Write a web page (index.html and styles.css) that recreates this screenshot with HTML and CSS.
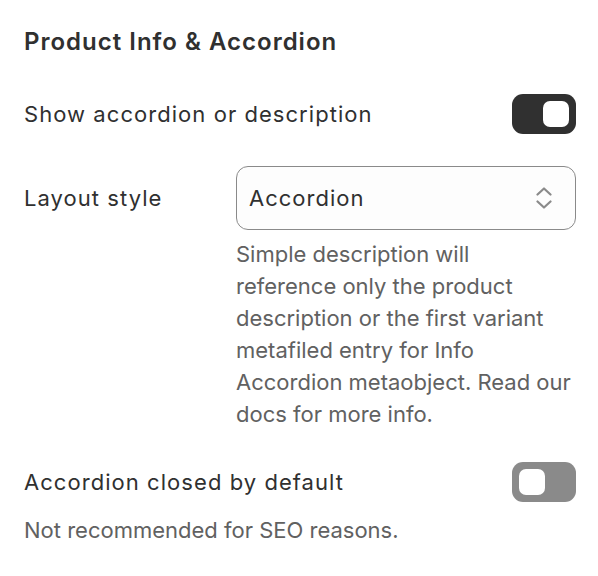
FILE: index.html
```html
<!DOCTYPE html>
<html>
<head>
<meta charset="utf-8">
<link rel="stylesheet" href="styles.css">
</head>
<body>
<div class="panel">
  <h2 class="title">Product Info &amp; Accordion</h2>
  <div class="row toggle-row">
    <span class="label">Show accordion or description</span>
    <span class="switch on"><span class="knob"></span></span>
  </div>
  <div class="row field-row">
    <span class="label field-label">Layout style</span>
    <div class="field">
      <div class="select">
        <span class="select-value">Accordion</span>
        <svg class="chev" width="16" height="24" viewBox="0 0 16 24" fill="none" stroke="#8a8a8a" stroke-width="2.2" stroke-linecap="round" stroke-linejoin="round">
          <path d="M1.5 8.5 L8 2.5 L14.5 8.5"/>
          <path d="M1.5 15.5 L8 21.5 L14.5 15.5"/>
        </svg>
      </div>
      <p class="help narrow">Simple description will reference only the product description or the first variant metafiled entry for Info Accordion metaobject. Read our docs for more info.</p>
    </div>
  </div>
  <div class="row toggle-row second">
    <span class="label">Accordion closed by default</span>
    <span class="switch off"><span class="knob"></span></span>
  </div>
  <p class="help full">Not recommended for SEO reasons.</p>
</div>
</body>
</html>
```
FILE: styles.css
```css
html, body {
  margin: 0;
  padding: 0;
  background: #ffffff;
}
body {
  font-family: Inter, "Noto Sans", sans-serif;
  color: #303030;
}
.panel {
  padding: 26px 22px 24px 24px;
  display: flex;
  flex-direction: column;
}
.title {
  margin: 0;
  font-size: 24px;
  line-height: 32px;
  font-weight: 600;
  letter-spacing: 1px;
  color: #303030;
}
.row {
  display: flex;
  align-items: center;
  justify-content: space-between;
}
.toggle-row {
  margin-top: 36px;
  height: 40px;
}
.toggle-row.second {
  margin-top: 32px;
}
.label {
  font-size: 22px;
  line-height: 32px;
  letter-spacing: 1.05px;
  color: #303030;
}
.switch {
  width: 64px;
  height: 40px;
  border-radius: 11px;
  box-sizing: border-box;
  display: flex;
  align-items: center;
  padding: 0 7px;
}
.switch.on {
  background: #303030;
  justify-content: flex-end;
}
.switch.off {
  background: #8a8a8a;
  justify-content: flex-start;
}
.knob {
  width: 26px;
  height: 26px;
  border-radius: 7px;
  background: #ffffff;
}
.field-row {
  margin-top: 32px;
  align-items: flex-start;
  justify-content: flex-start;
}
.field-label {
  width: 212px;
  flex: none;
  margin-top: 16px;
}
.field {
  flex: 1;
  display: flex;
  flex-direction: column;
}
.select {
  height: 64px;
  box-sizing: border-box;
  border: 1px solid #8a8a8a;
  border-radius: 12px;
  background: #fdfdfd;
  display: flex;
  align-items: center;
  justify-content: space-between;
  padding: 0 23px 0 12px;
}
.select-value {
  font-size: 22px;
  line-height: 32px;
  letter-spacing: 1px;
  color: #303030;
}
.help {
  margin: 8px 0 0 0;
  font-size: 22px;
  line-height: 32px;
  letter-spacing: 0;
  color: #616161;
}
.help.narrow {
  padding-right: 2px;
}
.help.full {
  margin-top: 12px;
}
```
